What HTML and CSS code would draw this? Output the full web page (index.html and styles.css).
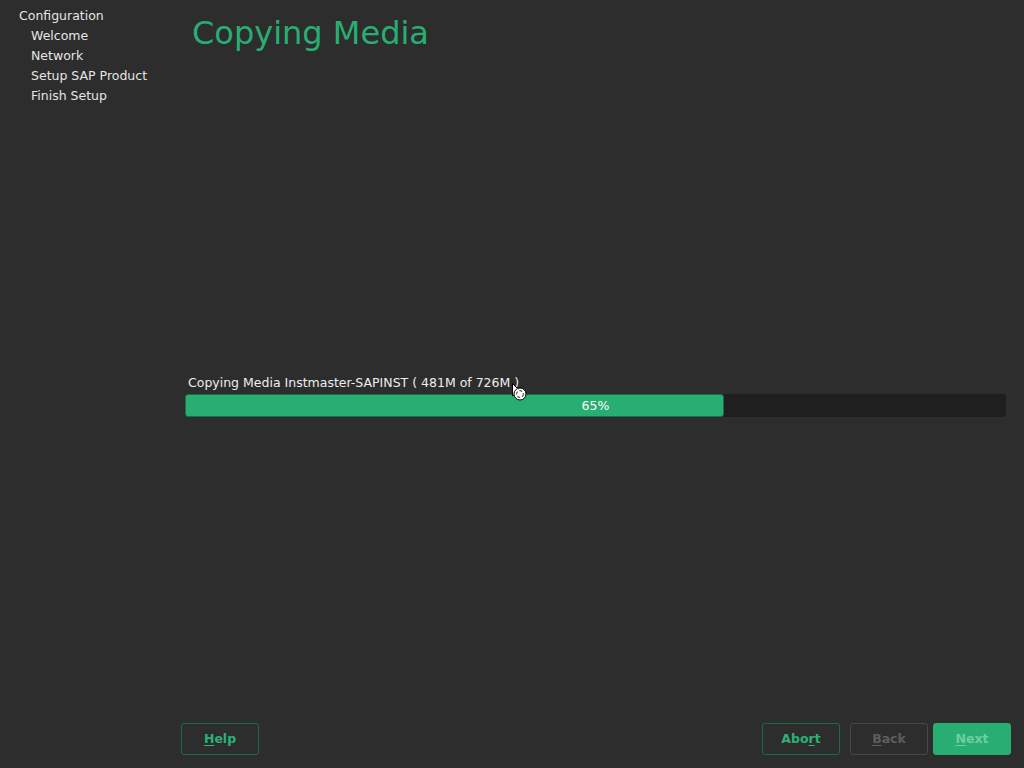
FILE: index.html
```html
<!DOCTYPE html>
<html>
<head>
<meta charset="utf-8">
<link rel="stylesheet" href="styles.css">
</head>
<body>
<div class="app">
  <nav class="sidebar">
    <div class="nav-head">Configuration</div>
    <div class="nav-item">Welcome</div>
    <div class="nav-item">Network</div>
    <div class="nav-item">Setup SAP Product</div>
    <div class="nav-item">Finish Setup</div>
  </nav>
  <main class="main">
    <h1 class="title">Copying Media</h1>
    <section class="content">
      <div class="progress-group">
        <div class="progress-label">Copying Media Instmaster-SAPINST ( 481M of 726M )</div>
        <div class="progress">
          <div class="progress-fill" style="width:65.6%"></div>
          <div class="progress-text">65%</div>
        </div>
      </div>
    </section>
    <footer class="buttons">
      <button class="btn btn-outline"><u>H</u>elp</button>
      <div class="spacer"></div>
      <button class="btn btn-outline">Abo<u>r</u>t</button>
      <button class="btn btn-disabled gap-l"><u>B</u>ack</button>
      <button class="btn btn-primary"><u>N</u>ext</button>
    </footer>
  </main>
  <svg class="cursor" width="22" height="22" viewBox="0 0 22 22">
    <path d="M1.5 1.5 L1.5 14 L4.5 11.2 L6.8 16 L8.6 15.2 L6.4 10.5 L10.5 10.5 Z" fill="#ffffff" stroke="#000000" stroke-width="1" stroke-linejoin="round"/>
    <circle cx="9" cy="12" r="6" fill="#ffffff" stroke="#000000" stroke-width="1"/>
    <circle cx="9" cy="12" r="3.4" fill="none" stroke="#555" stroke-width="1.2" stroke-dasharray="3 2"/>
  </svg>
</div>
</body>
</html>
```
FILE: styles.css
```css
html, body {
  margin: 0;
  padding: 0;
  background: #2d2d2d;
}
body {
  font-family: "DejaVu Sans", "Liberation Sans", sans-serif;
  font-size: 12.5px;
  color: #e6e6e6;
}
.app {
  position: relative;
  display: flex;
  width: 1024px;
  height: 768px;
  overflow: hidden;
}
.sidebar {
  width: 181px;
  flex: none;
  padding: 6px 0 0 19px;
  box-sizing: border-box;
  line-height: 20px;
}
.nav-item {
  padding-left: 12px;
}
.main {
  flex: 1;
  display: flex;
  flex-direction: column;
  padding: 13px 13px 13px 0;
  box-sizing: border-box;
  height: 768px;
}
.title {
  margin: 0;
  padding-left: 11px;
  font-size: 32px;
  font-weight: normal;
  line-height: 40px;
  color: #28ae73;
}
.content {
  flex: 1;
  display: flex;
  flex-direction: column;
  justify-content: center;
  padding-top: 14px;
}
.progress-group {
  padding: 0 5px 0 4px;
}
.progress-label {
  line-height: 20px;
  padding-left: 3px;
  margin-bottom: 1px;
  color: #eeeeee;
}
.progress {
  position: relative;
  height: 23px;
  background: #1f1f1f;
  border-radius: 3px;
  box-sizing: border-box;
}
.progress-fill {
  height: 100%;
  background: #28ae73;
  border: 1px solid #1a6e49;
  border-radius: 3px;
  box-sizing: border-box;
}
.progress-text {
  position: absolute;
  left: 0;
  right: 0;
  top: 0;
  line-height: 23px;
  text-align: center;
  color: #ffffff;
}
.buttons {
  display: flex;
  align-items: center;
}
.spacer {
  flex: 1;
}
.btn {
  width: 78px;
  height: 32px;
  border-radius: 3px;
  font-family: "DejaVu Sans", "Liberation Sans", sans-serif;
  font-size: 12.5px;
  font-weight: bold;
  background: transparent;
  padding: 0 0 1px 0;
  margin: 0;
  box-sizing: border-box;
}
.btn u {
  text-underline-offset: 2px;
}
.btn-outline {
  border: 1px solid #1b6b47;
  color: #2bb175;
}
.btn-disabled {
  border: 1px solid #474747;
  color: #5d5d5d;
}
.gap-l {
  margin: 0 5px 0 10px;
}
.btn-primary {
  border: 1px solid #28ae73;
  background: #28ae73;
  color: #6fcea0;
}
.cursor {
  position: absolute;
  left: 511px;
  top: 382px;
}
```
